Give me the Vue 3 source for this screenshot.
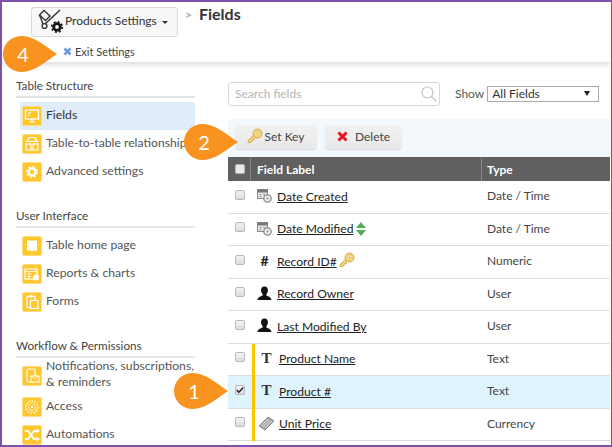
<template>
  <div class="frame">
    <header class="top">
      <div class="crumbs">
        <button class="settings-btn">
          <svg class="dolly" width="27" height="28" viewBox="0 0 27 28">
            <g fill="none" stroke="#333" stroke-width="1.400">
              <path d="M1.500 7 L6 2.500 L12 8 L7.500 12.500 Z" />
              <path d="M7 16 L22 2" stroke-width="1.500" />
              <path d="M1.500 7 L5 16" />
              <circle cx="6.500" cy="18" r="2.400" />
            </g>
            <circle cx="19" cy="19" r="3.300" fill="none" stroke="#111" stroke-width="2.800" />
            <circle cx="19" cy="19" r="5.300" fill="none" stroke="#111" stroke-width="1.600" stroke-dasharray="2 2.160" />
          </svg>
          <span>Products Settings</span>
          <i class="caret"></i>
        </button>
        <span class="sep">&gt;</span>
        <h1>Fields</h1>
      </div>
      <div class="exit">
        <svg width="9" height="9" viewBox="0 0 9 9"><path d="M1.500 1.500 L7.500 7.500 M7.500 1.500 L1.500 7.500" stroke="#6f97e8" stroke-width="2.600" /></svg>
        <span>Exit Settings</span>
      </div>
    </header>

    <div class="body">
      <nav class="side">
        <section v-for="group in groups" :key="group.title" class="group">
          <h2>{{ group.title }}</h2>
          <a
            v-for="item in group.items"
            :key="item.label"
            class="nav-item"
            :class="{ active: item.active, tall: item.tall }"
          >
            <span class="nav-icon">
              <svg width="16" height="16" viewBox="0 0 16 16" v-html="item.icon"></svg>
            </span>
            <span class="nav-label">{{ item.label }}</span>
          </a>
        </section>
      </nav>

      <main class="main">
        <div class="filters">
          <div class="search">
            <span>Search fields</span>
            <svg width="17" height="17" viewBox="0 0 17 17" fill="none" stroke="#c4c4c4" stroke-width="1.200">
              <circle cx="7.500" cy="7.500" r="5.500" /><path d="M11.500 11.500 L16 16" />
            </svg>
          </div>
          <label class="show">Show</label>
          <div class="select"><span>All Fields</span><i></i></div>
        </div>

        <div class="toolbar">
          <button class="tool set-key">
            <svg width="16" height="16" viewBox="0 0 16 16"><use href="#key-shape" /></svg>
            Set Key
          </button>
          <button class="tool del">
            <svg width="11" height="11" viewBox="0 0 11 11"><path d="M1.500 1.500 L9.500 9.500 M9.500 1.500 L1.500 9.500" stroke="#e8141c" stroke-width="3" /></svg>
            Delete
          </button>
        </div>

        <svg width="0" height="0" class="defs">
          <defs>
            <g id="key-shape">
              <path d="M1 12.500 L7 6.800 L9 9 L7.500 10 L7.200 11.500 L5.500 11.800 L5 13.500 L3 14.500 L1.200 14.500 Z" fill="#f6d27a" stroke="#c99a35" stroke-width=".8" />
              <circle cx="10.500" cy="5.500" r="4.500" fill="#f6d27a" stroke="#c99a35" stroke-width=".8" />
              <circle cx="11.500" cy="4.200" r="1.200" fill="#fff" stroke="#c99a35" stroke-width=".5" />
            </g>
          </defs>
        </svg>

        <div class="thead">
          <div class="col-check"><span class="box head-box"></span></div>
          <div class="col-label">Field Label</div>
          <div class="col-type">Type</div>
        </div>

        <div
          v-for="row in rows"
          :key="row.label"
          class="row"
          :class="{ selected: row.checked, marked: row.marked }"
        >
          <div class="col-check">
            <span class="box">
              <svg v-if="row.checked" width="11" height="10" viewBox="0 0 11 10"><path d="M1 5 L4 8 L10 1.500" fill="none" stroke="#222" stroke-width="2" /></svg>
            </span>
          </div>
          <div class="col-label cell">
            <span class="type-icon">
              <span v-if="row.kind === 'hash'" class="hash">#</span>
              <span v-else-if="row.kind === 'text'" class="tee">T</span>
              <svg v-else-if="row.kind === 'user'" width="15" height="15" viewBox="0 0 15 15"><path d="M7.500 0.500c2.300 0 3.400 1.700 3.400 3.800 0 1.700-.7 3.100-1.600 3.900v1.300c2 .8 4.900 1.600 5.200 4.500H.5c.3-2.900 3.200-3.700 5.200-4.500V8.200c-.9-.8-1.600-2.200-1.600-3.900 0-2.100 1.100-3.800 3.400-3.800z" fill="#111" /></svg>
              <svg v-else-if="row.kind === 'date'" width="15" height="15" viewBox="0 0 15 15">
                <rect x="0.500" y="1.500" width="10" height="9" fill="#e4e4e4" stroke="#8a8a8a" />
                <rect x="0.500" y="1.500" width="10" height="3" fill="#777" />
                <path d="M2.500 6.500h2M6 6.500h2M2.500 8.500h2" stroke="#999" />
                <circle cx="10.500" cy="10.500" r="3.700" fill="#eee" stroke="#888" stroke-width="1.300" />
                <circle cx="10.500" cy="10.500" r="1" fill="#888" />
              </svg>
              <svg v-else width="17" height="15" viewBox="0 0 17 15">
                <path d="M1 10 L10 1 L16 5 L7 14 Z" fill="#aaa" stroke="#888" />
                <path d="M3 10 L10 3 M5 11 L12 4 M7 12 L14 5" stroke="#ddd" stroke-width=".8" />
              </svg>
            </span>
            <a class="field-link">{{ row.label }}</a>
            <svg v-if="row.sort" class="after" width="10" height="14" viewBox="0 0 10 14">
              <path d="M5 0 L10 6 L0 6 Z M0 8 L10 8 L5 14 Z" fill="#4fae58" />
            </svg>
            <svg v-if="row.key" class="after key" width="16" height="16" viewBox="0 0 16 16"><use href="#key-shape" /></svg>
          </div>
          <div class="col-type cell-type">{{ row.type }}</div>
        </div>
      </main>
    </div>

    <div v-for="c in callouts" :key="c.n" class="callout" :class="'c' + c.n">
      <svg width="54" height="36" viewBox="0 0 54 36">
        <path d="M19 0 C31 0 42 10 54 18 C42 26 31 36 19 36 C8 36 0 28 0 18 C0 8 8 0 19 0 Z" />
      </svg>
      <span>{{ c.n }}</span>
    </div>
  </div>
</template>

<script setup>
const callouts = [{ n: 4 }, { n: 2 }, { n: 1 }]

const groups = [
  {
    title: 'Table Structure',
    items: [
      { label: 'Fields', active: true, icon: '<rect x="1.500" y="2" width="13" height="9" fill="none" stroke="#fff" stroke-width="1.300"/><path d="M5 14h6M8 11v3M4 5h3M4 7.500h2" stroke="#fff" stroke-width="1.200"/>' },
      { label: 'Table-to-table relationships', icon: '<path d="M5 1.500h6l2 4H3z" fill="none" stroke="#fff" stroke-width="1.200"/><path d="M1 5.500h14" stroke="#fff"/><rect x="2" y="8" width="5" height="6" fill="none" stroke="#fff" stroke-width="1.200"/><rect x="9" y="8" width="5" height="6" fill="none" stroke="#fff" stroke-width="1.200"/>' },
      { label: 'Advanced settings', icon: '<circle cx="8" cy="8" r="3.500" fill="none" stroke="#fff" stroke-width="2.400"/><circle cx="8" cy="8" r="5.300" fill="none" stroke="#fff" stroke-width="1.500" stroke-dasharray="2 2.160"/>' }
    ]
  },
  {
    title: 'User Interface',
    items: [
      { label: 'Table home page', icon: '<path d="M3 2.500h10v10H9l-1 1.500-1-1.500H3z" fill="#fff"/>' },
      { label: 'Reports & charts', icon: '<rect x="1" y="3" width="12" height="10" fill="none" stroke="#fff" stroke-width="1.200"/><path d="M1 5.500h12M3 8h5M3 10.500h4M5 6v6" stroke="#fff" stroke-width=".8"/><circle cx="12" cy="11.500" r="3" fill="#fff"/>' },
      { label: 'Forms', icon: '<rect x="3" y="2.500" width="8" height="11" fill="none" stroke="#fff" stroke-width="1.200"/><rect x="5.500" y="1" width="3" height="2.500" fill="#fff"/><rect x="6.500" y="6.500" width="7.500" height="8" fill="#ffc62e" stroke="#fff" stroke-width="1.200"/>' }
    ]
  },
  {
    title: 'Workflow & Permissions',
    items: [
      { label: 'Notifications, subscriptions,\n& reminders', tall: true, icon: '<rect x="3" y="1" width="8" height="13" rx="1.500" fill="none" stroke="#fff" stroke-width="1.200"/><rect x="7" y="8" width="8" height="6" fill="#ffc62e" stroke="#fff"/><path d="M7 8l4 3 4-3" fill="none" stroke="#fff" stroke-width=".8"/>' },
      { label: 'Access', icon: '<circle cx="8" cy="8" r="6" fill="none" stroke="#fff" stroke-width="1.200" stroke-dasharray="2 1"/><circle cx="8" cy="8" r="3.500" fill="none" stroke="#fff" stroke-dasharray="2 1"/><circle cx="8" cy="8" r="1.200" fill="#fff"/>' },
      { label: 'Automations', icon: '<path d="M1 4h3l6 8h3M1 12h3l6-8h3" fill="none" stroke="#fff" stroke-width="1.800"/><path d="M12.500 1.500L16 4l-3.500 2.500zM12.500 9.500L16 12l-3.500 2.500z" fill="#fff"/>' }
    ]
  }
]

const rows = [
  { label: 'Date Created', type: 'Date / Time', kind: 'date' },
  { label: 'Date Modified', type: 'Date / Time', kind: 'date', sort: true },
  { label: 'Record ID#', type: 'Numeric', kind: 'hash', key: true },
  { label: 'Record Owner', type: 'User', kind: 'user' },
  { label: 'Last Modified By', type: 'User', kind: 'user' },
  { label: 'Product Name', type: 'Text', kind: 'text', marked: true },
  { label: 'Product #', type: 'Text', kind: 'text', marked: true, checked: true },
  { label: 'Unit Price', type: 'Currency', kind: 'money', marked: true }
]
</script>

<style>
html, body { margin: 0; background: #fff; }
</style>

<style scoped>
.frame {
  position: relative;
  box-sizing: border-box;
  width: 612px;
  height: 447px;
  overflow: hidden;
  border: 2px solid #7b52a8;
  border-right-width: 1px;
  font-family: Lato, "Liberation Sans", sans-serif;
  font-size: 12px;
  color: #444;
  background: #fff;
}

.top {
  box-sizing: border-box;
  height: 60px;
  padding: 5px 0 0 29px;
  box-shadow: 0 2px 6px rgba(0, 0, 0, .16);
  position: relative;
}
.crumbs { display: flex; align-items: flex-start; }
.settings-btn {
  box-sizing: border-box;
  display: flex;
  align-items: center;
  width: 147px;
  height: 30px;
  padding: 0 0 0 6px;
  border: 1px solid #d8d8d8;
  border-radius: 3px;
  background: #f8f8f8;
  font: inherit;
  font-size: 12px;
  color: #333;
}
.dolly { flex: none; }
.settings-btn span { margin-top: -3px; }
.caret {
  margin: 0 0 0 5px;
  border-left: 3.500px solid transparent;
  border-right: 3.500px solid transparent;
  border-top: 3.500px solid #333;
}
.sep { margin: 0 0 0 7px; color: #aaa; font-size: 12px; font-weight: 700; }
h1 { margin: -3px 0 0 7px; font-size: 16px; line-height: 20px; font-weight: 700; color: #333; }
.exit {
  display: flex;
  align-items: center;
  gap: 3px;
  margin: 7px 0 0 32px;
  font-size: 11px;
  line-height: 15px;
  color: #444;
}

.body { display: flex; }

.side { width: 193px; flex: none; padding: 15px 0 0 14px; box-sizing: border-box; }
.group { margin-bottom: 21px; width: 179px; }
.group h2 {
  margin: 0 0 4px;
  padding: 0 0 3px;
  height: 16px;
  line-height: 16px;
  font-size: 11.700px;
  font-weight: 400;
  color: #444;
  border-bottom: 2px solid #e4e4e4;
}
.nav-item {
  display: flex;
  align-items: center;
  height: 28px;
  padding-left: 2px;
  margin-left: 4px;
  white-space: nowrap;
  font-size: 12.200px;
  color: #555;
}
.nav-item.active { background: #e0ecfa; border-radius: 2px; color: #333; }
.nav-item.tall { margin-bottom: 3px; white-space: pre; line-height: 16px; }
.nav-icon {
  flex: none;
  box-sizing: border-box;
  display: flex;
  align-items: center;
  justify-content: center;
  width: 20px;
  height: 20px;
  margin-right: 4px;
  border: 1px solid #ffdd85;
  border-radius: 2px;
  background: #ffc62e;
}
.nav-label { position: relative; top: -2px; }

.main { flex: 1; min-width: 0; padding-left: 33px; padding-top: 20px; margin-left: 0; }
.filters { display: flex; align-items: center; height: 24px; margin-bottom: 13px; }
.search {
  box-sizing: border-box;
  display: flex;
  align-items: center;
  justify-content: space-between;
  width: 212px;
  height: 24px;
  padding: 0 2px 2px 6px;
  border: 1px solid #d8d8d8;
  border-radius: 3px;
  color: #b5b5b5;
  font-size: 12px;
}
.show { margin-left: 15px; margin-bottom: 2px; font-size: 12px; color: #555; }
.select {
  box-sizing: border-box;
  display: flex;
  align-items: center;
  justify-content: space-between;
  width: 112px;
  height: 16px;
  margin-left: 3px;
  padding: 0 8px 1px 4px;
  border: 1px solid #aaa;
  color: #333;
  font-size: 12px;
}
.select i {
  border-left: 3px solid transparent;
  border-right: 3px solid transparent;
  border-top: 5px solid #222;
}

.toolbar {
  display: flex;
  gap: 8px;
  height: 38px;
  padding: 6px 0 0 7px;
  box-sizing: border-box;
  background: #f3f8fc;
}
.tool {
  display: flex;
  align-items: center;
  justify-content: center;
  gap: 1px;
  height: 24px;
  padding: 0 0 2px;
  border: 0;
  border-radius: 3px;
  background: linear-gradient(#f2f2f2, #e8e8e8);
  box-shadow: 0 1px 1px rgba(0, 0, 0, .12);
  font: inherit;
  font-size: 12px;
  color: #444;
}
.set-key { width: 82px; }
.del { width: 77px; gap: 7px; }
.defs { position: absolute; }

.thead, .row { display: flex; align-items: center; width: 382px; }
.thead {
  height: 24px;
  background: #606060;
  color: #fff;
  font-size: 12px;
  font-weight: 700;
}
.thead .col-label { border-left: 1px solid #888; line-height: 23px; padding-left: 6px; }
.thead .col-type { border-left: 1px solid #888; line-height: 23px; padding-left: 5px; }
.col-check { width: 22px; flex: none; display: flex; justify-content: center; box-sizing: border-box; padding-left: 2px; }
.col-label { width: 231px; flex: none; box-sizing: border-box; }
.col-type { flex: 1; }
.box {
  box-sizing: border-box;
  display: flex;
  align-items: center;
  justify-content: center;
  width: 10px;
  height: 10px;
  border: 1px solid #b9b9b9;
  border-radius: 2px;
  background: linear-gradient(#f3f3f3, #dcdcdc);
}
.head-box { background: #e8e8e8; }

.row {
  box-sizing: border-box;
  height: 32.500px;
  border-bottom: 1.500px solid #dcdcdc;
  position: relative;
}
.row .box { margin-top: -4px; }
.row.selected { background: #dff3fd; }
.row.marked::before {
  content: "";
  position: absolute;
  left: 24px;
  top: 0;
  bottom: -1px;
  width: 2.500px;
  background: #ffc400;
}
.cell { display: flex; align-items: center; padding-left: 6px; }
.type-icon {
  width: 17px;
  height: 16px;
  flex: none;
  display: flex;
  align-items: center;
  justify-content: center;
  margin-right: 4px;
  margin-top: -2px;
}
.marked .cell { padding-left: 8px; }
.marked .type-icon { margin-right: 4px; }
.hash { font-size: 14px; font-weight: 700; color: #222; }
.tee { font-family: "Liberation Serif", serif; font-size: 15px; font-weight: 700; color: #333; }
.field-link { color: #222; font-size: 12.100px; text-decoration: underline; margin-top: -1px; }
.after { margin-left: 3px; margin-top: -1px; }
.after.key { margin-left: 2px; margin-top: -3px; }
.cell-type { color: #444; font-size: 12px; padding-left: 6px; padding-bottom: 2px; }

.callout { position: absolute; width: 54px; height: 36px; }
.callout svg { display: block; fill: #f7931e; }
.callout span {
  position: absolute;
  left: 13px;
  top: 8px;
  width: 14px;
  line-height: 20px;
  text-align: center;
  color: #fff;
  font-size: 20px;
}
.c4 { left: 1px; top: 34px; }
.c2 { left: 182px; top: 122px; }
.c1 { left: 172px; top: 371px; }
</style>
